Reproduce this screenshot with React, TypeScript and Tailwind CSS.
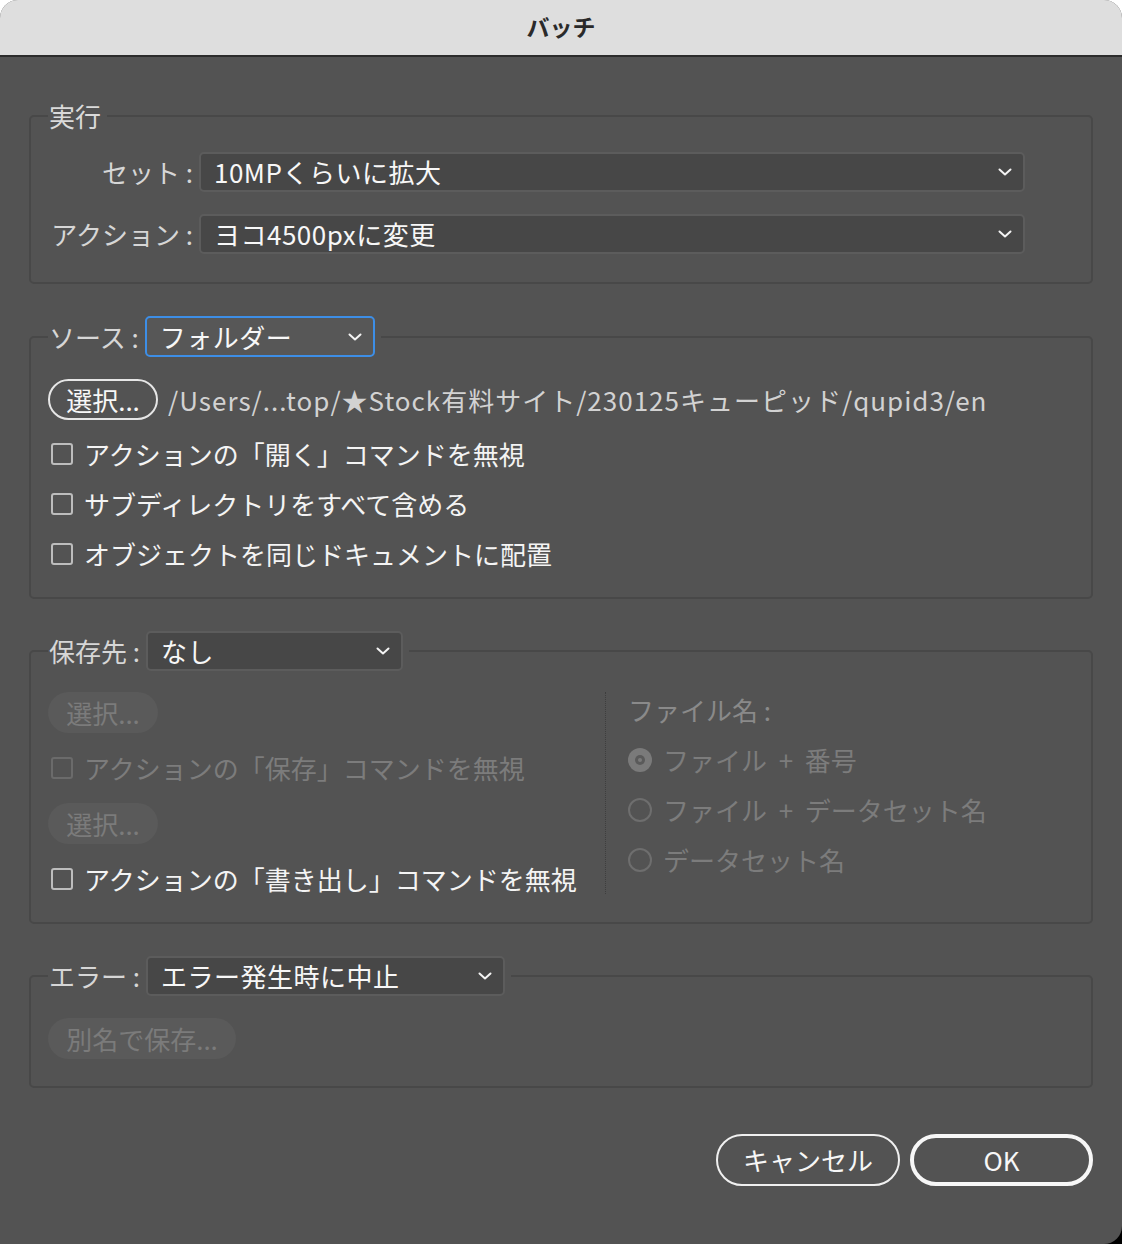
import React from "react";

const FONT = { fontFamily: '"Noto Sans CJK JP", "Noto Sans", sans-serif' };

function Chevron() {
  return (
    <svg width="16" height="16" viewBox="0 0 16 16" className="shrink-0">
      <polyline points="2.5,5.5 8,10.5 13.5,5.5" fill="none" stroke="#f4f4f4" strokeWidth="2" strokeLinecap="round" strokeLinejoin="round" />
    </svg>
  );
}

function Select({ value, w, focused }: { value: string; w: string; focused?: boolean }) {
  return (
    <div
      className={
        focused
          ? `${w} h-[41px] flex items-center justify-between pl-[13px] pr-[10px] rounded-[5px] border-2 border-[#3d8ee6] bg-[#575757] text-[#f7f7f7]`
          : `${w} h-[40px] flex items-center justify-between pl-[13px] pr-[10px] rounded-[5px] border-2 border-[#5c5c5c] bg-[#474747] text-[#f7f7f7]`
      }
    >
      <span className="leading-[30px] whitespace-nowrap tracking-[0.5px]">{value}</span>
      <Chevron />
    </div>
  );
}

function Checkbox({ label, disabled }: { label: string; disabled?: boolean }) {
  return (
    <div className="h-[30px] flex items-center">
      <div
        className={
          disabled
            ? "ml-[3px] w-[22px] h-[22px] shrink-0 rounded-[3px] border-2 border-[#6b6b6b]"
            : "ml-[3px] w-[22px] h-[22px] shrink-0 rounded-[3px] border-2 border-[#bdbdbd]"
        }
      />
      <span className={disabled ? "ml-[11px] leading-[30px] whitespace-nowrap text-[#7c7c7c]" : "ml-[11px] leading-[30px] whitespace-nowrap text-[#f4f4f4]"}>{label}</span>
    </div>
  );
}

function Radio({ label, checked }: { label: string; checked?: boolean }) {
  return (
    <div className="h-[30px] flex items-center">
      {checked ? (
        <div className="w-[24px] h-[24px] shrink-0 rounded-full bg-[#7a7a7a] flex items-center justify-center">
          <div className="w-[10px] h-[10px] rounded-full bg-[#5a5a5a] flex items-center justify-center">
            <div className="w-[4px] h-[4px] rounded-full bg-[#7a7a7a]" />
          </div>
        </div>
      ) : (
        <div className="w-[24px] h-[24px] shrink-0 rounded-full border-2 border-[#6e6e6e]" />
      )}
      <span className="ml-[11px] leading-[30px] whitespace-pre text-[#7c7c7c]">{label}</span>
    </div>
  );
}

function PillButton({ label, disabled, w }: { label: string; disabled?: boolean; w: string }) {
  return disabled ? (
    <div className={`${w} h-[41px] rounded-full bg-[#5a5a5a] flex items-center justify-center text-[#7b7b7b] leading-[30px] whitespace-nowrap`}>{label}</div>
  ) : (
    <div className={`${w} h-[41px] shrink-0 rounded-full border-2 border-[#e6e6e6] flex items-center justify-center text-[#f7f7f7] leading-[30px] whitespace-nowrap`}>{label}</div>
  );
}

export default function App() {
  return (
    <div className="w-[1122px] h-[1244px] bg-[linear-gradient(to_bottom,#ffffff_50%,#000000_50%)]" style={FONT}>
      <div className="w-[1122px] h-[1244px] bg-[#535353] rounded-t-[18px] rounded-br-[18px] overflow-hidden flex flex-col text-[26px]">
        {/* title bar */}
        <div className="h-[57px] shrink-0 bg-[#dedede] border-b-2 border-[#2c2c2c] flex items-center justify-center">
          <span className="text-[23px] font-bold text-[#2a2a2a] leading-[30px] -mt-[3px]">バッチ</span>
        </div>

        <div className="flex flex-col px-[29px] pt-[43px]">
          {/* 実行 */}
          <fieldset className="border-2 border-[#484848] rounded-[5px] px-[17px] pt-[20px] pb-[28px]">
            <legend className="pl-[1px] pr-[6px]">
              <span className="block leading-[32px] text-[#dadada]">実行</span>
            </legend>
            <div className="flex flex-col gap-[22px]">
              <div className="flex items-center">
                <span className="w-[145px] text-right leading-[30px] text-[#d6d6d6] whitespace-pre">セット :</span>
                <div className="ml-[6px]"><Select value="10MPくらいに拡大" w="w-[826px]" /></div>
              </div>
              <div className="flex items-center">
                <span className="w-[145px] text-right leading-[30px] text-[#d6d6d6] whitespace-pre">アクション :</span>
                <div className="ml-[6px]"><Select value="ヨコ4500pxに変更" w="w-[826px]" /></div>
              </div>
            </div>
          </fieldset>

          {/* ソース */}
          <fieldset className="mt-[32px] border-2 border-[#484848] rounded-[5px] px-[17px] pt-[22px] pb-[28px]">
            <legend className="pl-[1px] pr-[6px]">
              <div className="flex items-center gap-[6px]">
                <span className="leading-[30px] text-[#d6d6d6] whitespace-pre">ソース :</span>
                <Select value="フォルダー" w="w-[230px]" focused />
              </div>
            </legend>
            <div className="flex flex-col gap-[19px]">
              <div className="flex items-center">
                <PillButton label="選択..." w="w-[110px]" />
                <span className="ml-[10px] leading-[30px] text-[#d2d2d2] whitespace-nowrap tracking-[1px]">/Users/...top/★Stock有料サイト/230125キューピッド/qupid3/en</span>
              </div>
              <div className="flex flex-col gap-[20px]">
                <Checkbox label="アクションの「開く」コマンドを無視" />
                <Checkbox label="サブディレクトリをすべて含める" />
                <Checkbox label="オブジェクトを同じドキュメントに配置" />
              </div>
            </div>
          </fieldset>

          {/* 保存先 */}
          <fieldset className="mt-[32px] border-2 border-[#484848] rounded-[5px] px-[17px] pt-[21px] pb-[28px]">
            <legend className="pl-[1px] pr-[6px]">
              <div className="flex items-center gap-[6px]">
                <span className="leading-[30px] text-[#d6d6d6] whitespace-pre">保存先 :</span>
                <Select value="なし" w="w-[257px]" />
              </div>
            </legend>
            <div className="flex">
              <div className="w-[557px] flex flex-col gap-[20px]">
                <PillButton label="選択..." w="w-[110px]" disabled />
                <Checkbox label="アクションの「保存」コマンドを無視" disabled />
                <PillButton label="選択..." w="w-[110px]" disabled />
                <Checkbox label="アクションの「書き出し」コマンドを無視" />
              </div>
              <div className="border-l border-dotted border-[#3e3e3e] pl-[22px] pt-[3px] flex flex-col gap-[20px]">
                <div className="h-[30px] flex items-center leading-[30px] text-[#8a8a8a] whitespace-pre">ファイル名 :</div>
                <Radio label="ファイル  +  番号" checked />
                <Radio label="ファイル  +  データセット名" />
                <Radio label="データセット名" />
              </div>
            </div>
          </fieldset>

          {/* エラー */}
          <fieldset className="mt-[32px] border-2 border-[#484848] rounded-[5px] px-[17px] pt-[22px] pb-[27px]">
            <legend className="pl-[1px] pr-[6px]">
              <div className="flex items-center gap-[6px]">
                <span className="leading-[30px] text-[#d6d6d6] whitespace-pre">エラー :</span>
                <Select value="エラー発生時に中止" w="w-[359px]" />
              </div>
            </legend>
            <PillButton label="別名で保存..." w="w-[188px]" disabled />
          </fieldset>

          {/* buttons */}
          <div className="mt-[46px] flex justify-end gap-[10px]">
            <div className="w-[184px] h-[52px] rounded-full border-2 border-[#f0f0f0] flex items-center justify-center text-[#f7f7f7] leading-[30px]">キャンセル</div>
            <div className="w-[183px] h-[52px] rounded-full border-4 border-[#f7f7f7] flex items-center justify-center text-[#f7f7f7] leading-[30px]">OK</div>
          </div>
        </div>
      </div>
    </div>
  );
}
